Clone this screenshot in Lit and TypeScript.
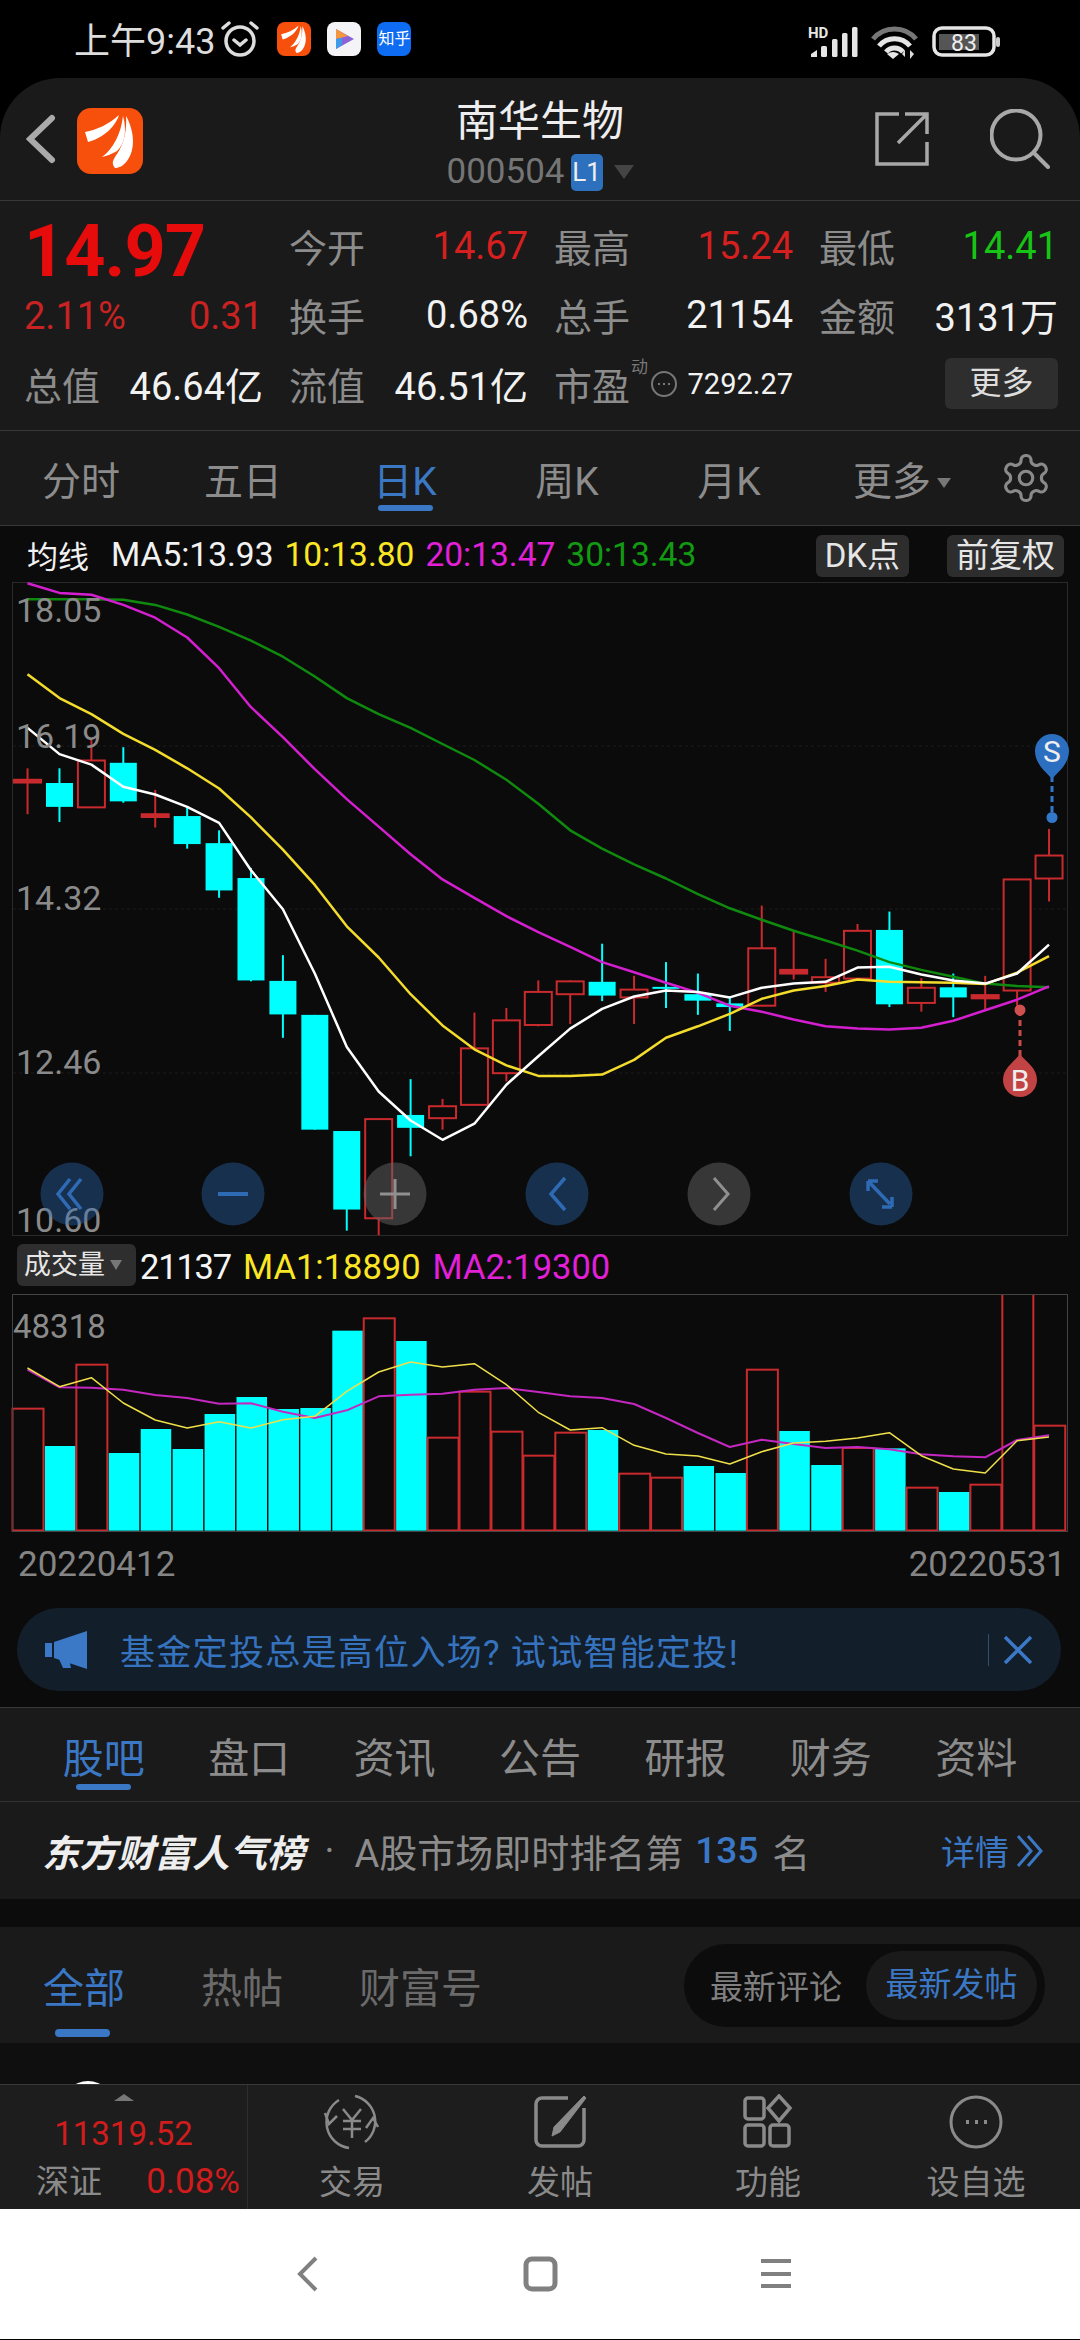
import {LitElement, html, css, svg} from 'lit';
import {customElement} from 'lit/decorators.js';

const RED = '#c92a2e';
const CYAN = '#00ffff';
const CENTERS = Array.from({length: 33}, (_, i) => 40 + i * 46.35);

// [wickTop, wickBottom, bodyTop, bodyBottom, isUp], read off the reference at zoomed scale
const CANDLES: [number, number, number, number, boolean][] = [
  [543, 643, 568, 574, true], [543, 660, 575, 627, false], [480, 628, 526, 628, true], [497, 618, 531, 615, false],
  [590, 672, 643, 649, true], [625, 718, 647, 708, false], [678, 825, 706, 809, false], [760, 1007, 782, 1005, false],
  [950, 1130, 1006, 1079, false], [1080, 1330, 1080, 1330, false], [1333, 1550, 1333, 1504, false], [1307, 1560, 1307, 1523, true],
  [1220, 1388, 1298, 1326, false], [1263, 1330, 1279, 1305, true], [1075, 1277, 1153, 1276, true], [1065, 1225, 1092, 1207, true],
  [1005, 1105, 1030, 1102, true], [1005, 1100, 1007, 1035, true], [925, 1050, 1008, 1038, false], [995, 1100, 1025, 1042, true],
  [965, 1065, 1019, 1022, false], [990, 1080, 1035, 1049, false], [1040, 1115, 1055, 1063, false], [842, 1060, 935, 1060, true],
  [895, 1003, 982, 990, true], [958, 1030, 998, 1010, true], [882, 1003, 897, 1001, true], [855, 1063, 895, 1057, false],
  [1000, 1073, 1021, 1054, true], [990, 1085, 1020, 1042, false], [995, 1068, 1037, 1044, true], [785, 1060, 785, 1027, true],
  [675, 833, 733, 783, true],
];

const MA5 = [455, 512, 535, 583, 600, 627, 662, 765, 850, 990, 1150, 1247, 1310, 1352, 1317, 1232, 1170, 1110, 1067, 1040, 1027, 1030, 1042, 1021, 1012, 1008, 977, 975, 992, 1005, 1012, 990, 927];
const MA10 = [338, 390, 425, 468, 503, 543, 587, 650, 720, 797, 887, 955, 1035, 1103, 1155, 1190, 1213, 1213, 1210, 1178, 1130, 1105, 1078, 1045, 1027, 1017, 1003, 1008, 1009, 1010, 1013, 988, 952];
const MA20 = [140, 161, 165, 187, 215, 258, 325, 410, 475, 545, 610, 670, 730, 785, 825, 865, 900, 932, 965, 987, 1010, 1032, 1060, 1073, 1090, 1105, 1110, 1112, 1108, 1093, 1070, 1047, 1018];
const MA30 = [175, 175, 175, 176, 187, 208, 235, 265, 300, 343, 390, 425, 455, 490, 525, 568, 620, 678, 718, 752, 783, 817, 848, 873, 897, 918, 940, 965, 982, 997, 1012, 1017, 1020];

// [top, isUp]
const VOLUMES: [number, boolean][] = [
  [542, true], [654, false], [410, true], [675, false], [603, false], [663, false], [558, false], [507, false], [543, false],
  [540, false], [308, false], [271, true], [339, false], [629, true], [491, true], [611, true], [683, true], [614, true],
  [606, false], [737, true], [749, true], [714, false], [735, false], [425, true], [609, false], [711, false], [660, true],
  [661, false], [779, true], [792, false], [770, true], [197, true], [593, true],
];
const VOL_MA1 = [420, 476, 449, 525, 576, 600, 581, 600, 575, 565, 490, 432, 402, 417, 407, 470, 553, 606, 599, 652, 678, 684, 708, 671, 645, 640, 630, 614, 683, 723, 735, 638, 627];
const VOL_MA2 = [425, 478, 479, 485, 501, 510, 527, 526, 551, 570, 547, 505, 500, 497, 485, 480, 492, 505, 510, 528, 570, 615, 657, 635, 648, 660, 657, 664, 679, 685, 688, 636, 622];

const px = (z: number) => z / 1.452;
const py = (z: number) => z / 2.178 - 63;
const vy = (z: number) => z / 3 - 66;

const line = (values: number[], mapY: (z: number) => number, color: string, width: number) => svg`
  <polyline fill="none" stroke=${color} stroke-width=${width} stroke-linejoin="round"
    points=${values.map((v, i) => `${px(CENTERS[i]).toFixed(1)},${mapY(v).toFixed(1)}`).join(' ')}></polyline>`;

const logo = (size: number, radius: number) => html`
  <svg width=${size} height=${size} viewBox="0 0 66 66">
    <rect width="66" height="66" rx=${radius} fill="#f7500c"></rect>
    <path fill="#fff" d="M8 24C20 22 32 16 42 7 38 20 24 31 11 34Z"></path>
    <path fill="#fff" d="M25 49C36 41 44 26 46 8 50 22 48 36 40 43 35 46 30 48 25 49Z"></path>
    <path fill="#fff" d="M38 60C34 55 36 52 40 46 47 36 50 22 49 8 56 20 60 40 50 53 46 58 42 60 38 60Z"></path>
  </svg>`;

@customElement('app-root')
export class AppRoot extends LitElement {
  static styles = css`
    :host {
      display: block;
      width: 1080px;
      height: 2340px;
      overflow: hidden;
      background: #000;
      font-family: Roboto, "Noto Sans CJK SC", sans-serif;
      font-weight: 400;
      color: #8c8c8c;
    }
    svg { display: block; flex: none; }

    .status {
      height: 78px;
      padding: 0 80px 0 74px;
      box-sizing: border-box;
      display: flex;
      align-items: center;
      color: #ddd;
      font-size: 36px;
    }
    .status .time { margin-right: 5px; margin-top: -2px; }
    .status .apps { display: flex; gap: 16px; margin-left: 17px; }
    .app-icon {
      width: 34px;
      height: 34px;
      border-radius: 8px;
      overflow: hidden;
    }
    .zhihu {
      background: #0d6cf2;
      color: #fff;
      font-size: 16px;
      line-height: 34px;
      text-align: center;
    }
    .status .right { margin-left: auto; display: flex; align-items: center; }

    .panel { background: #1a1a1a; border-radius: 60px 60px 0 0; }
    .header {
      height: 123px;
      box-sizing: border-box;
      border-bottom: 1px solid #383838;
      display: flex;
      align-items: center;
      padding: 0 30px 0 26px;
      position: relative;
    }
    .header .logo { margin-left: 20px; margin-top: 3px; }
    .title {
      position: absolute;
      left: 0;
      right: 0;
      top: 15px;
      display: flex;
      flex-direction: column;
      align-items: center;
    }
    .title .name { color: #eee; font-size: 42px; line-height: 58px; }
    .code {
      display: flex;
      align-items: center;
      color: #757575;
      font-size: 35px;
      line-height: 38px;
      margin-top: 2px;
    }
    .badge {
      width: 32px;
      height: 37px;
      margin-left: 6px;
      border-radius: 5px;
      background: #2d70bd;
      color: #eee;
      font-size: 26px;
      line-height: 37px;
      text-align: center;
    }
    .caret {
      width: 0;
      height: 0;
      margin-left: 11px;
      border: 10px solid transparent;
      border-top: 14px solid #444;
      border-bottom: 0;
    }
    .header .actions { margin-left: auto; display: flex; align-items: center; gap: 61px; }

    .quote {
      height: 230px;
      box-sizing: border-box;
      border-bottom: 1px solid #383838;
      padding: 10px 0 0 24px;
      display: grid;
      grid-template-columns: 239px 239px 239px 239px;
      grid-template-rows: 69px 69px 69px;
      column-gap: 26px;
      font-size: 38px;
    }
    .cell { display: flex; justify-content: space-between; align-items: center; }
    .cell b { font-weight: 400; color: #f2f2f2; }
    .cell b.up { color: #d61f1f; }
    .cell b.down { color: #17c517; }
    .price { grid-row: span 2; color: #e60c0c; }
    .price .big { font-size: 72px; font-weight: 700; line-height: 74px; margin-top: 4px; letter-spacing: -1px; }
    .price .sub {
      display: flex;
      justify-content: space-between;
      color: #c82222;
      line-height: 42px;
      margin-top: 6px;
    }
    .pe { display: flex; align-items: center; position: relative; }
    .pe sup {
      position: absolute;
      left: 77px;
      top: 4px;
      font-size: 17px;
      color: #777;
    }
    .pe svg { margin-left: 20px; }
    .pe b { margin-left: auto; font-size: 29px; font-weight: 400; color: #f2f2f2; }
    .more {
      justify-content: flex-end;
    }
    .more span {
      width: 113px;
      height: 51px;
      border-radius: 6px;
      background: #2e2e2e;
      color: #ddd;
      font-size: 32px;
      line-height: 50px;
      text-align: center;
    }

    .periods {
      height: 95px;
      box-sizing: border-box;
      border-bottom: 1px solid #383838;
      display: grid;
      grid-template-columns: repeat(6, 162px) 108px;
      font-size: 39px;
      align-items: center;
    }
    .periods span { text-align: center; position: relative; }
    .periods .on { color: #3a78c6; }
    .periods .on::after {
      content: "";
      position: absolute;
      left: 54px;
      top: 55px;
      width: 55px;
      height: 6px;
      border-radius: 3px;
      background: #3a78c6;
    }
    .periods .extra { padding-left: 22px; }
    .periods i {
      display: inline-block;
      margin-left: 6px;
      vertical-align: 7px;
      border: 7px solid transparent;
      border-top: 10px solid #777;
      border-bottom: 0;
    }
    .periods svg { justify-self: center; }

    .chart { background: #0b0b0b; height: 1181px; }
    .legend {
      height: 56px;
      display: flex;
      align-items: center;
      font-size: 33.5px;
      padding: 0 16px 0 27px;
      color: #f2f2f2;
    }
    .legend .lead { font-size: 31px; margin-right: 22px; }
    .legend span { margin-right: 11px; }
    .yellow { color: #fbe625; }
    .magenta { color: #e120d8; }
    .green { color: #129a12; }
    .legend .chip {
      height: 42px;
      margin: 3px 0 0;
      padding: 0 9px;
      border-radius: 6px;
      background: #2d2d2d;
      font-size: 33px;
      line-height: 41px;
      color: #e6e6e6;
    }
    .chips { margin-left: auto; display: flex; gap: 38px; }
    .vol-legend {
      height: 58px;
      display: flex;
      align-items: center;
      font-size: 34.5px;
      color: #f5f5f5;
      padding: 0 0 0 17px;
    }
    .vol-legend .select {
      width: 119px;
      height: 42px;
      box-sizing: border-box;
      padding-left: 7px;
      border-radius: 6px;
      background: #2e2e2e;
      font-size: 27px;
      line-height: 41px;
      color: #e6e6e6;
      display: flex;
      align-items: center;
      margin-right: 4px;
    }
    .vol-legend .select i {
      margin-left: 5px;
      border: 6px solid transparent;
      border-top: 10px solid #777;
      border-bottom: 0;
    }
    .vol-legend span { margin: 4px 12px 0 0; }
    .vol-legend .count { letter-spacing: -1.2px; }
    .dates {
      height: 64px;
      display: flex;
      justify-content: space-between;
      align-items: center;
      padding: 0 14px 0 18px;
      font-size: 35px;
      color: #858585;
    }
    .banner {
      margin: 12px 19px 16px 17px;
      height: 83px;
      border-radius: 42px;
      background: #131e2b;
      display: flex;
      align-items: center;
      color: #3673bf;
      font-size: 35px;
      padding: 0 28px 0 28px;
    }
    .banner .text { margin-left: 33px; flex: 1; letter-spacing: 1.3px; }
    .banner .sep { width: 1px; height: 32px; background: #33506f; margin-right: 14px; }

    .tabs {
      height: 95px;
      box-sizing: border-box;
      border-top: 1px solid #383838;
      border-bottom: 1px solid #333;
      display: grid;
      grid-template-columns: repeat(7, 1fr);
      padding: 0 31px;
      align-items: center;
      font-size: 41px;
      background: #1a1a1a;
    }
    .tabs span { text-align: center; position: relative; }
    .tabs .on { color: #3a78c6; }
    .tabs .on::after {
      content: "";
      position: absolute;
      left: 45px;
      top: 59px;
      width: 55px;
      height: 6px;
      border-radius: 3px;
      background: #3a78c6;
    }

    .rank {
      height: 97px;
      background: #1a1a1a;
      display: flex;
      align-items: center;
      padding: 0 35px 0 42px;
      font-size: 38px;
    }
    .rank .brand {
      color: #eee;
      font-size: 37.5px;
      font-weight: 700;
      font-style: italic;
      white-space: nowrap;
    }
    .rank .dot { margin: 0 20px 0 20px; }
    .rank .num { color: #3a78c6; font-weight: 500; margin: 0 14px 0 12px; font-size: 37px; }
    .rank .detail { margin-left: auto; color: #3a78c6; display: flex; align-items: center; gap: 6px; font-size: 34px; }

    .gap { height: 28px; background: #0c0c0c; }
    .subtabs {
      height: 116px;
      background: #1a1a1a;
      display: flex;
      align-items: center;
      padding: 0 35px 0 43px;
      font-size: 41px;
      color: #6a6a6a;
    }
    .subtabs > span { position: relative; margin-right: 76px; }
    .subtabs .on { color: #3a78c6; }
    .subtabs .on::after {
      content: "";
      position: absolute;
      left: 12px;
      top: 74px;
      width: 55px;
      height: 8px;
      border-radius: 4px;
      background: #3a78c6;
    }
    .sort {
      margin-left: auto;
      width: 361px;
      height: 83px;
      box-sizing: border-box;
      padding: 7px 8px 7px 26px;
      border-radius: 42px;
      background: #0c0c0c;
      display: flex;
      align-items: center;
      justify-content: space-between;
      font-size: 33px;
      color: #808080;
    }
    .sort .active {
      width: 171px;
      height: 69px;
      border-radius: 35px;
      background: #1a1a1a;
      color: #3a78c6;
      line-height: 67px;
      text-align: center;
    }
    .feed { height: 41px; background: #0f0f0f; overflow: hidden; padding-left: 62px; }
    .avatar { width: 52px; height: 52px; margin-top: 38px; border-radius: 50%; background: #fff; }

    .bar {
      height: 125px;
      box-sizing: border-box;
      border-top: 1px solid #3a3a3a;
      background: #1d1d1d;
      display: grid;
      grid-template-columns: 248px repeat(4, 1fr);
      font-size: 33px;
      color: #8a8a8a;
    }
    .index {
      border-right: 1px solid #2e2e2e;
      display: flex;
      flex-direction: column;
      align-items: center;
      position: relative;
    }
    .index i {
      margin-top: 9px;
      border: 10px solid transparent;
      border-bottom: 7px solid #777;
      border-top: 0;
    }
    .index .value { color: #d01c1c; font-size: 33px; line-height: 40px; margin-top: 13px; }
    .index .row {
      align-self: stretch;
      display: flex;
      justify-content: space-between;
      padding: 0 7px 0 36px;
      line-height: 46px;
      margin-top: 5px;
    }
    .index .row b { font-weight: 400; color: #d01c1c; font-size: 35px; }
    .action { display: flex; flex-direction: column; align-items: center; padding-top: 9px; }
    .action span { line-height: 46px; margin-top: 10px; }

    .nav {
      height: 130px;
      background: #fff;
      display: block;
    }
    .kchart { overflow: visible; }
  `;

  private renderCandles() {
    return CANDLES.map(([wickTop, wickBottom, bodyTop, bodyBottom, up], i) => {
      const x = px(CENTERS[i]);
      const color = up ? RED : CYAN;
      return svg`
        <line x1=${x} x2=${x} y1=${py(wickTop)} y2=${py(wickBottom)} stroke=${color} stroke-width="2"></line>
        <rect x=${x - 13.5} y=${py(bodyTop)} width="27" height=${Math.max(py(bodyBottom) - py(bodyTop), 2)}
          fill=${up && bodyBottom - bodyTop > 8 ? '#0b0b0b' : color} stroke=${up ? RED : 'none'} stroke-width="2"></rect>`;
    });
  }

  private renderKChart() {
    const buttons: [number, string][] = [[72, 'b'], [233, 'b'], [395, 'g'], [557, 'b'], [719, 'g'], [881, 'b']];
    return html`
      <svg class="kchart" width="1080" height="654" viewBox="0 0 1080 654">
        <rect x="12.5" y="0.5" width="1055" height="653" fill="none" stroke="#2a2a2a"></rect>
        ${[164, 327, 491].map(y => svg`<line x1="13" x2="1067" y1=${y} y2=${y} stroke="#1d1d1d" stroke-dasharray="3 3"></line>`)}
        ${this.renderCandles()}
        ${line(MA30, py, '#0f8a0f', 2.5)}
        ${line(MA20, py, '#d41fd0', 2.5)}
        ${line(MA10, py, '#f3dc2c', 2.5)}
        ${line(MA5, py, '#ffffff', 2.5)}
        <g fill="#8a8a8a" font-size="34" font-family="Roboto, sans-serif">
          <text x="16" y="40">18.05</text>
          <text x="16" y="166">16.19</text>
          <text x="16" y="328">14.32</text>
          <text x="16" y="492">12.46</text>
          <text x="16" y="650">10.60</text>
        </g>
        ${buttons.map(([x, kind]) => svg`
          <circle cx=${x} cy="612" r="31.5" fill=${kind === 'b' ? 'rgba(46,110,190,.38)' : 'rgba(100,100,100,.5)'}></circle>`)}
        <g fill="none" stroke="#2f6ab5" stroke-width="3.5">
          <path d="M70 597 58 612 70 627M81 597 69 612 81 627"></path>
          <path d="M218 612H248" stroke-width="4"></path>
          <path d="M565 596 551 612 565 628"></path>
          <path d="M868 599 890 622M868 599H878M868 599V609M892 625H882M892 625V615"></path>
        </g>
        <g fill="none" stroke="#909090" stroke-width="3">
          <path d="M380 612H410M395 597V627"></path>
          <path d="M714 596 728 612 714 628"></path>
        </g>
        <path d="M1052 194 1052 235" stroke="#3277c9" stroke-width="3" stroke-dasharray="6 4"></path>
        <circle cx="1052" cy="235.500" r="5.500" fill="#3277c9"></circle>
        <path d="M1052 197C1046 190 1035 182 1035 169A17 17 0 0 1 1069 169C1069 182 1058 190 1052 197Z" fill="#2c6fc0"></path>
        <text x="1052" y="180" font-size="30" text-anchor="middle" fill="#eee" font-family="Roboto, sans-serif">S</text>
        <path d="M1020 428 1020 475" stroke="#c84a4a" stroke-width="3" stroke-dasharray="6 4"></path>
        <circle cx="1020" cy="428" r="5.500" fill="#d04f4f"></circle>
        <path d="M1020 472C1014 480 1003 486 1003 498A17 17 0 0 0 1037 498C1037 486 1026 480 1020 472Z" fill="#c24343"></path>
        <text x="1020" y="509" font-size="30" text-anchor="middle" fill="#eee" font-family="Roboto, sans-serif">B</text>
      </svg>`;
  }

  private renderVolume() {
    return html`
      <svg width="1080" height="238" viewBox="0 0 1080 238">
        ${VOLUMES.map(([top, up], i) => {
          const x = 12.5 + i * 31.93;
          return up
            ? svg`<rect x=${x} y=${vy(top)} width="31" height=${vy(908) - vy(top)} fill="#0b0b0b" stroke=${RED} stroke-width="2"></rect>
                  <rect x=${x} y=${vy(908) - 1} width="31" height="3" fill=${RED}></rect>`
            : svg`<rect x=${x + .5} y=${vy(top)} width="30.500" height=${vy(908) - vy(top)} fill=${CYAN}></rect>`;
        })}
        <rect x="12.500" y="0.500" width="1055" height="237" fill="none" stroke="#444"></rect>
        ${line(VOL_MA2, vy, '#c428c0', 2)}
        ${line(VOL_MA1, vy, '#efe04a', 1.5)}
        <text x="13" y="44" font-size="33" fill="#8a8a8a" font-family="Roboto, sans-serif">48318</text>
      </svg>`;
  }

  private renderStatusIcons() {
    return html`
      <svg width="192" height="50" viewBox="808 20 192 50">
        <text x="808" y="44" font-size="15" font-weight="700" fill="#e6e6e6" font-family="Roboto, sans-serif">HD</text>
        <g fill="#e6e6e6">
          <path d="M811 63V60L817 56V63Z"></path>
          <rect x="821" y="52" width="6" height="11" rx="1.500"></rect>
          <rect x="832" y="45" width="5.500" height="18" rx="1.500"></rect>
          <rect x="842" y="39" width="5.500" height="24" rx="1.500"></rect>
          <rect x="852" y="33" width="5.500" height="30" rx="1.500"></rect>
        </g>
        <g fill="none" stroke-width="5">
          <path d="M873 45A28 28 0 0 1 916 45" stroke="#777"></path>
          <path d="M879 52A20 20 0 0 1 910 52" stroke="#e6e6e6"></path>
          <path d="M886 58A11 11 0 0 1 903 58" stroke="#e6e6e6"></path>
        </g>
        <path d="M893 65 887 60Q893 56 899 60Z" fill="#e6e6e6"></path>
        <path d="M905 63V56L902 60ZM910 56V65L914 60Z" fill="#ddd"></path>
        <rect x="934" y="34" width="60" height="27" rx="8" fill="none" stroke="#e6e6e6" stroke-width="3.500"></rect>
        <rect x="939" y="40" width="40" height="16" fill="#555"></rect>
        <text x="964" y="57" font-size="23" text-anchor="middle" fill="#eee" font-family="Roboto, sans-serif">83</text>
        <rect x="996" y="43" width="4" height="10" rx="2" fill="#ccc"></rect>
      </svg>`;
  }

  render() {
    return html`
      <div class="status">
        <span class="time">上午9:43</span>
        <svg width="40" height="38" viewBox="0 0 40 38" fill="none" stroke="#ddd" stroke-width="3.500">
          <circle cx="20" cy="21" r="14"></circle>
          <path d="M3 8 9 3M37 8 31 3M14 20 20 25 26 20" stroke-linecap="round"></path>
        </svg>
        <div class="apps">
          <div class="app-icon">${logo(34, 9)}</div>
          <div class="app-icon">
            <svg width="34" height="34" viewBox="0 0 34 34">
              <rect width="34" height="34" fill="#f4f4f6"></rect>
              <path d="M9 7 27 17 9 27Z" fill="#8a63d8"></path>
              <path d="M9 7 21 14 9 17Z" fill="#f4973c"></path>
              <path d="M9 17 15 16 15 23 9 27Z" fill="#3f9be8"></path>
            </svg>
          </div>
          <div class="app-icon zhihu">知乎</div>
        </div>
        <div class="right">${this.renderStatusIcons()}</div>
      </div>

      <div class="panel">
        <div class="header">
          <svg width="31" height="50" viewBox="0 0 31 50" fill="none" stroke="#aaa" stroke-width="6" stroke-linecap="round">
            <path d="M26 4 4 25 26 46"></path>
          </svg>
          <div class="logo">${logo(66, 14)}</div>
          <div class="title">
            <div class="name">南华生物</div>
            <div class="code">000504<span class="badge">L1</span><span class="caret"></span></div>
          </div>
          <div class="actions">
            <svg width="54" height="54" viewBox="0 0 54 54" fill="none" stroke="#a8a8a8" stroke-width="3.500">
              <path d="M24 2H2V52H52V30M30 2H52V22M52 2 23 31"></path>
            </svg>
            <svg width="60" height="60" viewBox="0 0 60 60" fill="none" stroke="#a8a8a8" stroke-width="4">
              <circle cx="26" cy="26" r="24.500"></circle>
              <path d="M44 44 58 58" stroke-linecap="round"></path>
            </svg>
          </div>
        </div>

        <div class="quote">
          <div class="price">
            <div class="big">14.97</div>
            <div class="sub"><span>2.11%</span><span>0.31</span></div>
          </div>
          <div class="cell">今开<b class="up">14.67</b></div>
          <div class="cell">最高<b class="up">15.24</b></div>
          <div class="cell">最低<b class="down">14.41</b></div>
          <div class="cell">换手<b>0.68%</b></div>
          <div class="cell">总手<b>21154</b></div>
          <div class="cell">金额<b>3131万</b></div>
          <div class="cell">总值<b>46.64亿</b></div>
          <div class="cell">流值<b>46.51亿</b></div>
          <div class="pe">
            市盈<sup>动</sup>
            <svg width="28" height="28" viewBox="0 0 28 28" fill="none" stroke="#777" stroke-width="2">
              <circle cx="14" cy="14" r="12"></circle>
              <path d="M8 14H10M13 14H15M18 14H20"></path>
            </svg>
            <b>7292.27</b>
          </div>
          <div class="cell more"><span>更多</span></div>
        </div>

        <div class="periods">
          <span>分时</span>
          <span>五日</span>
          <span class="on">日K</span>
          <span>周K</span>
          <span>月K</span>
          <span class="extra">更多<i></i></span>
          <svg width="54" height="54" viewBox="0 0 24 24" fill="none" stroke="#8a8a8a" stroke-width="1.400">
            <path d="M12.220 2h-.44a2 2 0 0 0-2 2v.18a2 2 0 0 1-1 1.730l-.43.25a2 2 0 0 1-2 0l-.15-.08a2 2 0 0 0-2.730.73l-.22.38a2 2 0 0 0 .73 2.730l.15.1a2 2 0 0 1 1 1.720v.51a2 2 0 0 1-1 1.740l-.15.09a2 2 0 0 0-.73 2.730l.22.38a2 2 0 0 0 2.730.73l.15-.08a2 2 0 0 1 2 0l.43.25a2 2 0 0 1 1 1.730V20a2 2 0 0 0 2 2h.44a2 2 0 0 0 2-2v-.18a2 2 0 0 1 1-1.730l.43-.25a2 2 0 0 1 2 0l.15.08a2 2 0 0 0 2.730-.73l.22-.39a2 2 0 0 0-.73-2.730l-.15-.08a2 2 0 0 1-1-1.740v-.5a2 2 0 0 1 1-1.740l.15-.09a2 2 0 0 0 .73-2.730l-.22-.38a2 2 0 0 0-2.730-.73l-.15.08a2 2 0 0 1-2 0l-.43-.25a2 2 0 0 1-1-1.730V4a2 2 0 0 0-2-2z"></path>
            <circle cx="12" cy="12" r="3"></circle>
          </svg>
        </div>
      </div>

      <div class="chart">
        <div class="legend">
          <span class="lead">均线</span>
          <span>MA5:13.93</span>
          <span class="yellow">10:13.80</span>
          <span class="magenta">20:13.47</span>
          <span class="green">30:13.43</span>
          <div class="chips">
            <span class="chip">DK点</span>
            <span class="chip">前复权</span>
          </div>
        </div>
        ${this.renderKChart()}
        <div class="vol-legend">
          <div class="select">成交量<i></i></div>
          <span class="count">21137</span>
          <span class="yellow">MA1:18890</span>
          <span class="magenta">MA2:19300</span>
        </div>
        ${this.renderVolume()}
        <div class="dates"><span>20220412</span><span>20220531</span></div>
        <div class="banner">
          <svg width="42" height="40" viewBox="0 0 42 40" fill="#3b78c5">
            <path d="M0 13H7V27H0ZM9 12 42 1V39L9 28Z"></path>
            <path d="M14 29H24L26 38H18Z"></path>
          </svg>
          <span class="text">基金定投总是高位入场? 试试智能定投!</span>
          <span class="sep"></span>
          <svg width="30" height="30" viewBox="0 0 30 30" fill="none" stroke="#3b78c5" stroke-width="3.500">
            <path d="M2 2 28 28M28 2 2 28"></path>
          </svg>
        </div>
      </div>

      <div class="tabs">
        <span class="on">股吧</span>
        <span>盘口</span>
        <span>资讯</span>
        <span>公告</span>
        <span>研报</span>
        <span>财务</span>
        <span>资料</span>
      </div>

      <div class="rank">
        <span class="brand">东方财富人气榜</span>
        <span class="dot">·</span>
        <span>A股市场即时排名第</span>
        <span class="num">135</span>
        <span>名</span>
        <span class="detail">详情
          <svg width="30" height="36" viewBox="0 0 30 36" fill="none" stroke="#3a78c6" stroke-width="3">
            <path d="M3 3 16 18 3 33M13 3 26 18 13 33"></path>
          </svg>
        </span>
      </div>

      <div class="gap"></div>

      <div class="subtabs">
        <span class="on">全部</span>
        <span>热帖</span>
        <span>财富号</span>
        <div class="sort">
          <span>最新评论</span>
          <span class="active">最新发帖</span>
        </div>
      </div>

      <div class="feed"><div class="avatar"></div></div>

      <div class="bar">
        <div class="index">
          <i></i>
          <div class="value">11319.52</div>
          <div class="row">深证<b>0.08%</b></div>
        </div>
        <div class="action">
          <svg width="62" height="56" viewBox="0 0 62 56" fill="none" stroke="#8a8a8a" stroke-width="2.500">
            <path d="M18 6A26 26 0 0 0 28 54M34 2A26 26 0 0 1 44 48"></path>
            <path d="M4 19 8 30 16 22M57 33 52 24 45 34"></path>
            <path d="M22 15 31 26 40 15M31 26V44M22 27H40M22 35H40"></path>
          </svg>
          <span>交易</span>
        </div>
        <div class="action">
          <svg width="56" height="56" viewBox="0 0 56 56" fill="none" stroke="#8a8a8a" stroke-width="3.500">
            <path d="M36 4H10A6 6 0 0 0 4 10V46A6 6 0 0 0 10 52H46A6 6 0 0 0 52 46V14"></path>
            <path d="M52 2 54 4 28 38 20 42 22 33Z" fill="#8a8a8a" stroke-width="1"></path>
          </svg>
          <span>发帖</span>
        </div>
        <div class="action">
          <svg width="50" height="56" viewBox="0 0 50 56" fill="none" stroke="#8a8a8a" stroke-width="3.500">
            <rect x="2" y="4" width="19" height="21" rx="3"></rect>
            <path d="M36 2 47 14 36 27 25 14Z"></path>
            <rect x="2" y="31" width="19" height="21" rx="3"></rect>
            <rect x="27" y="31" width="19" height="21" rx="3"></rect>
          </svg>
          <span>功能</span>
        </div>
        <div class="action">
          <svg width="56" height="56" viewBox="0 0 56 56" fill="none" stroke="#8a8a8a" stroke-width="3">
            <circle cx="28" cy="28" r="25"></circle>
            <path d="M18 28H21M27 28H30M36 28H39" stroke-width="4"></path>
          </svg>
          <span>设自选</span>
        </div>
      </div>

      <svg class="nav" width="1080" height="130" viewBox="0 0 1080 130" fill="none" stroke="#808080" stroke-width="4">
        <path d="M316 49 300 65 316 81"></path>
        <rect x="526" y="50" width="29" height="30" rx="6" stroke-width="5"></rect>
        <path d="M761 52H791M761 65H791M761 77H791" stroke-width="4"></path>
      </svg>
    `;
  }
}
